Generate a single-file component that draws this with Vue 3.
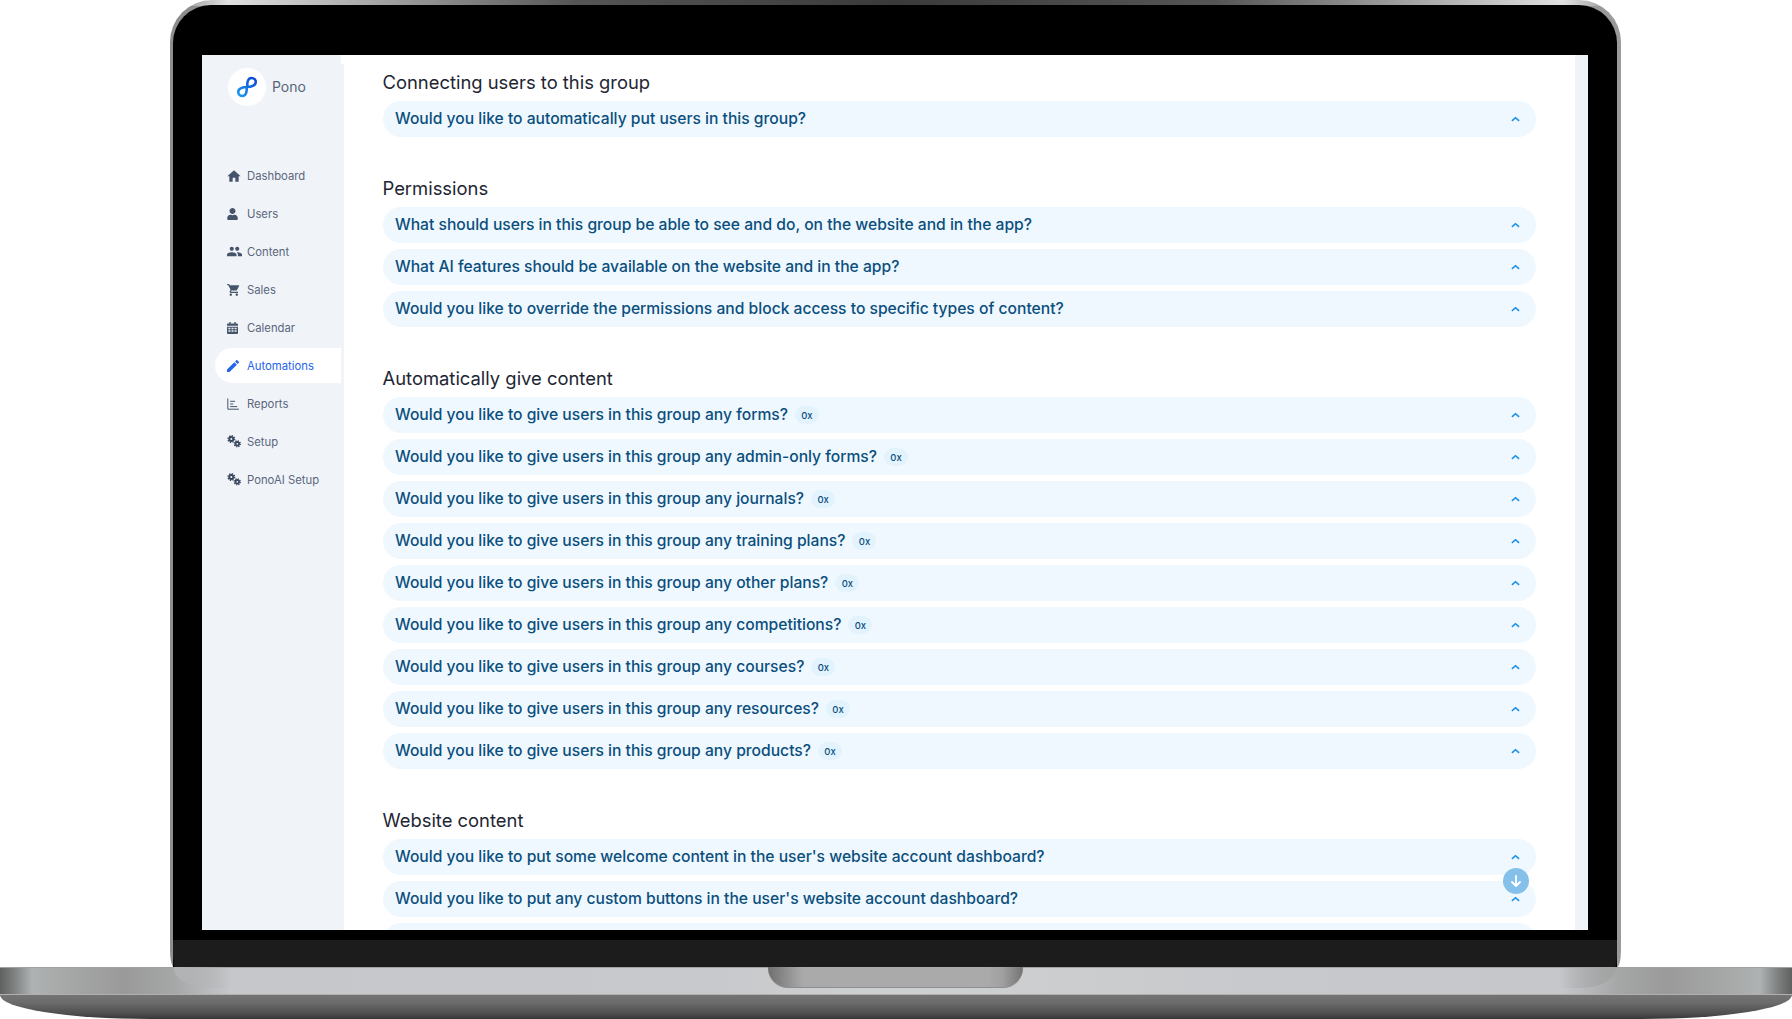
<script setup>
const nav = [
  { label: 'Dashboard', icon: 'home' },
  { label: 'Users', icon: 'user' },
  { label: 'Content', icon: 'users' },
  { label: 'Sales', icon: 'cart' },
  { label: 'Calendar', icon: 'calendar' },
  { label: 'Automations', icon: 'pen', active: true },
  { label: 'Reports', icon: 'chart' },
  { label: 'Setup', icon: 'cogs' },
  { label: 'PonoAI Setup', icon: 'cogs' },
]
const sections = [
  { title: 'Connecting users to this group', rows: [{ q: 'Would you like to automatically put users in this group?' }] },
  { title: 'Permissions', rows: [
    { q: 'What should users in this group be able to see and do, on the website and in the app?' },
    { q: 'What AI features should be available on the website and in the app?' },
    { q: 'Would you like to override the permissions and block access to specific types of content?' },
  ] },
  { title: 'Automatically give content', rows: [
    'forms', 'admin-only forms', 'journals', 'training plans', 'other plans', 'competitions', 'courses', 'resources', 'products',
  ].map((n) => ({ q: `Would you like to give users in this group any ${n}?`, badge: '0x' })) },
  { title: 'Website content', rows: [
    { q: "Would you like to put some welcome content in the user's website account dashboard?" },
    { q: "Would you like to put any custom buttons in the user's website account dashboard?" },
    { q: '' },
  ] },
]
</script>

<template>
  <div class="device">
    <div class="lid">
      <div class="screen">
        <aside class="sidebar">
          <div class="brand">
            <span class="logo">
              <svg viewBox="0 0 24 24" width="24" height="24" fill="none">
                <defs>
                  <linearGradient id="lg" x1="0" y1="1" x2="1" y2="0">
                    <stop offset="0" stop-color="#1c9cf0" />
                    <stop offset="1" stop-color="#0b44d4" />
                  </linearGradient>
                </defs>
                <path d="M12.300 12C12 7 13 3 16.500 3 19 3 20.800 5 20.800 7 20.800 10.500 16 12 12 12 8 12 3.200 13.500 3.200 17 3.200 19 5 21 7.500 21 11 21 12 17 11.700 12" stroke="url(#lg)" stroke-width="2.600" stroke-linecap="round" />
              </svg>
            </span>
            <span class="brand-name">Pono</span>
          </div>
          <nav class="nav">
            <a v-for="item in nav" :key="item.label" class="nav-item" :class="{ active: item.active }">
              <span class="nav-icon">
                <svg v-if="item.icon === 'home'" viewBox="1.500 2.500 21 18" width="14" height="12" fill="currentColor"><path d="M10 20v-6h4v6h5v-8h3L12 3 2 12h3v8z" /></svg>
                <svg v-else-if="item.icon === 'user'" viewBox="0 0 448 512" width="11" height="12" fill="currentColor"><path d="M224 256c70.700 0 128-57.300 128-128S294.700 0 224 0 96 57.300 96 128s57.300 128 128 128zm89.600 32h-16.700c-22.200 10.200-46.900 16-72.900 16s-50.600-5.800-72.900-16h-16.700C60.200 288 0 348.200 0 422.400V464c0 26.500 21.500 48 48 48h352c26.500 0 48-21.500 48-48v-41.600c0-74.200-60.200-134.400-134.400-134.400z" /></svg>
                <svg v-else-if="item.icon === 'users'" viewBox="1 5 22 14" width="15" height="11" fill="currentColor"><path d="M16 11c1.660 0 2.990-1.340 2.990-3S17.660 5 16 5c-1.660 0-3 1.340-3 3s1.340 3 3 3zm-8 0c1.660 0 2.990-1.340 2.990-3S9.660 5 8 5C6.340 5 5 6.340 5 8s1.340 3 3 3zm0 2c-2.330 0-7 1.170-7 3.500V19h14v-2.500c0-2.330-4.670-3.500-7-3.500zm8 0c-.29 0-.62.02-.97.05 1.160.84 1.970 1.970 1.970 3.450V19h6v-2.500c0-2.330-4.670-3.500-7-3.500z" /></svg>
                <svg v-else-if="item.icon === 'cart'" viewBox="1 2 21 20" width="13" height="12" fill="currentColor"><path d="M7 18c-1.100 0-1.990.9-1.990 2S5.900 22 7 22s2-.9 2-2-.9-2-2-2zM1 2v2h2l3.600 7.590-1.350 2.450c-.16.28-.25.61-.25.96 0 1.100.9 2 2 2h12v-2H7.420c-.14 0-.25-.11-.25-.25l.03-.12.9-1.630h7.450c.75 0 1.410-.41 1.750-1.030l3.580-6.490c.08-.14.12-.31.12-.48 0-.55-.45-1-1-1H5.210l-.94-2H1zm16 16c-1.100 0-1.990.9-1.990 2s.89 2 1.990 2 2-.9 2-2-.9-2-2-2z" /></svg>
                <svg v-else-if="item.icon === 'calendar'" viewBox="0 0 12 13" width="11" height="12" fill="currentColor"><path fill-rule="evenodd" d="M2.500 0h1.500v1.500h4V0h1.500v1.500H11a1 1 0 0 1 1 1V4H0V2.500a1 1 0 0 1 1-1h1.500zM0 5h12v7a1 1 0 0 1-1 1H1a1 1 0 0 1-1-1zm1.500 1.200v1.600h2.200V6.200zm3.400 0v1.600h2.200V6.200zm3.400 0v1.600h2.200V6.200zM1.500 9v1.600h2.200V9zm3.400 0v1.600h2.200V9zm3.400 0v1.600h2.200V9z" /></svg>
                <svg v-else-if="item.icon === 'pen'" viewBox="3 3 18 18" width="12" height="12" fill="currentColor"><path d="M3 17.250V21h3.750L17.810 9.940l-3.750-3.750L3 17.250zM20.710 7.040c.39-.39.39-1.020 0-1.410l-2.340-2.340c-.39-.39-1.020-.39-1.410 0l-1.830 1.830 3.750 3.750 1.830-1.830z" /></svg>
                <svg v-else-if="item.icon === 'chart'" viewBox="0 0 12 12" width="12" height="12" fill="none" stroke="currentColor" stroke-width="1"><path d="M.8.5v10.700H12M3.200 3.300h4.800M3.200 6h3M3.200 8.600h7" /></svg>
                <svg v-else viewBox="0 0 14 13" width="14" height="13" fill="none" stroke="#39475e">
                  <circle cx="4.300" cy="4" r="2" stroke-width="1.900" />
                  <circle cx="4.300" cy="4" r="3.300" stroke-width="1.400" stroke-dasharray="1.300 1.290" />
                  <circle cx="10.300" cy="8.800" r="1.800" stroke-width="1.800" />
                  <circle cx="10.300" cy="8.800" r="3" stroke-width="1.300" stroke-dasharray="1.200 1.160" />
                </svg>
              </span>
              <span>{{ item.label }}</span>
            </a>
          </nav>
        </aside>
        <main class="main">
          <section v-for="s in sections" :key="s.title" class="section">
            <h2 class="heading">{{ s.title }}</h2>
            <div v-for="(r, i) in s.rows" :key="i" class="row">
              <span class="q">{{ r.q }}</span>
              <span v-if="r.badge" class="badge">{{ r.badge }}</span>
              <svg v-if="r.q" class="chev" viewBox="0 0 10 6" width="9" height="6" fill="none"><path d="M1 5l4-3.500L9 5" stroke="currentColor" stroke-width="1.700" /></svg>
            </div>
          </section>
        </main>
        <div class="track"></div>
        <button class="scroll-btn" type="button" aria-label="Scroll down">
          <svg viewBox="0 0 14 14" width="14" height="14" fill="none" stroke="#fff" stroke-width="1.800" stroke-linecap="round" stroke-linejoin="round"><path d="M7 1.800v10M3 8l4 4 4-4" /></svg>
        </button>
      </div>
      <div class="chin"></div>
    </div>
    <div class="base">
      <div class="deck">
        <span class="hinge left"></span>
        <span class="hinge right"></span>
        <span class="notch"></span>
      </div>
      <div class="foot"></div>
    </div>
  </div>
</template>

<style scoped>
.device {
  width: 1792px;
  height: 1019px;
  overflow: hidden;
  background: #fff;
  display: flex;
  flex-direction: column;
  font-family: Inter, "Liberation Sans", sans-serif;
  position: relative;
}
.lid {
  position: relative;
  z-index: 2;
  height: 967px;
  margin: 0 171px 0 170px;
  padding: 5px 4px 0 3px;
  box-sizing: border-box;
  border-radius: 42px 42px 4px 4px / 42px 42px 17px 17px;
  background:
    linear-gradient(90deg, #8a8a8a 0, #e0e0e0 4%, #555 28%, #3a3a3a 50%, #555 72%, #e0e0e0 96%, #8a8a8a 100%) top / 100% 6px no-repeat,
    linear-gradient(90deg, #8e8e8e 0, #6a6a6a 50%, #9a9a9a 100%);
  display: flex;
  flex-direction: column;
}
.screen {
  flex: 1;
  min-height: 0;
  background: #000;
  border-radius: 38px 38px 0 0;
  padding: 50px 29px 10px 29px;
  display: grid;
  grid-template-columns: 142px 1fr 13px;
  position: relative;
}
.sidebar {
  background: #f0f4f9;
  position: relative;
  padding: 13px 0 0 13px;
  box-sizing: border-box;
  height: 875px;
}
.sidebar::after {
  content: '';
  position: absolute;
  top: 0;
  right: 0;
  width: 3px;
  height: 9px;
  background: #fff;
}
.brand {
  display: flex;
  align-items: center;
  gap: 6px;
  margin-left: 13px;
  height: 38px;
}
.logo {
  width: 38px;
  height: 38px;
  border-radius: 50%;
  background: #fff;
  display: flex;
  align-items: center;
  justify-content: center;
}
.brand-name {
  font-size: 14px;
  line-height: 38px;
  height: 38px;
  color: #5a6478;
}
.nav {
  margin-top: 52px;
  display: flex;
  flex-direction: column;
  gap: 3px;
}
.nav-item {
  height: 35px;
  margin-right: 3px;
  padding-left: 12px;
  border-radius: 18px 0 0 18px;
  display: flex;
  align-items: center;
  font-size: 11.300px;
  color: #5b667c;
}
.nav-item.active {
  background: #fff;
  color: #2563eb;
}
.nav-icon {
  width: 20px;
  flex: none;
  display: flex;
  align-items: center;
  color: #46546b;
}
.active .nav-icon {
  color: #2563eb;
}
.main {
  background: #fff;
  height: 875px;
  overflow: hidden;
  padding: 10px 39px 0 38.500px;
  box-sizing: border-box;
}
.section {
  margin-bottom: 34px;
}
.heading {
  margin: 0 0 6px;
  height: 30px;
  line-height: 34px;
  font-size: 18.400px;
  font-weight: 400;
  color: #1e2633;
}
.row {
  height: 36px;
  margin-bottom: 6px;
  padding: 0 13px 0 12.500px;
  border-radius: 18px;
  background: #eff8ff;
  display: flex;
  align-items: center;
  box-sizing: border-box;
}
.q {
  font-size: 15.650px;
  font-weight: 500;
  color: #0b4f7d;
  white-space: nowrap;
  padding-bottom: 1px;
}
.badge {
  margin-left: 7px;
  width: 24px;
  height: 18px;
  border-radius: 9px;
  background: #e3f3fe;
  color: #0b4f7d;
  font-size: 9.500px;
  font-weight: 500;
  display: flex;
  align-items: center;
  justify-content: center;
}
.chev {
  margin-left: auto;
  margin-right: 3px;
  color: #1690e4;
}
.track {
  background: #f0f4f9;
  height: 875px;
}
.scroll-btn {
  position: absolute;
  left: 1330px;
  top: 863px;
  width: 26px;
  height: 26px;
  padding: 0;
  border: 0;
  border-radius: 50%;
  background: #84c0ea;
  display: flex;
  align-items: center;
  justify-content: center;
}
.chin {
  position: absolute;
  left: 3px;
  right: 4px;
  bottom: 0;
  height: 27px;
  border-radius: 0 0 2px 2px / 0 0 14px 14px;
  background: #1c1c1c;
}
.base {
  flex: 1;
  display: flex;
  flex-direction: column;
  position: relative;
}
.deck {
  height: 28px;
  position: relative;
  border-top: 1px solid #a2a2a2;
  border-bottom: 1px solid #b3adad;
  box-sizing: border-box;
  background: linear-gradient(90deg, #5f6060 0, #7b7d7d .7%, #aeb2b2 1.800%, #a5a6a6 4%, #9a9a9a 7%, #a5a6a6 9.600%, #c6c7cb 12.900%, #c8c9cc 40%, #ced1d1 50%, #c8c9cc 70%, #c6c7cb 87.100%, #a5a6a6 90.400%, #9a9a9a 93%, #a5a6a6 96%, #aeb2b2 98.200%, #7b7d7d 99.300%, #5f6060 100%);
}
.hinge {
  position: absolute;
  top: -1px;
  width: 58px;
  height: 21px;
}
.hinge.left {
  left: 174px;
  border-radius: 0 0 0 36px / 0 0 0 20px;
  background: linear-gradient(90deg, #b2b4b5, rgba(198, 199, 203, 0));
}
.hinge.right {
  right: 176px;
  border-radius: 0 0 36px 0 / 0 0 20px 0;
  background: linear-gradient(270deg, #a2a3a3, rgba(198, 199, 203, 0));
}
.notch {
  position: absolute;
  top: -1px;
  left: 768px;
  width: 255px;
  height: 21px;
  border-radius: 0 0 20px 20px;
  border-bottom: 1px solid #8e8e8e;
  box-sizing: border-box;
  background: linear-gradient(90deg, #6f6f6f 0, #a3a3a3 12%, #aaa 14%, #aaa 86%, #a0a0a0 92%, #747474 100%);
}
.foot {
  flex: 1;
  border-radius: 0 0 150px 150px / 0 0 24px 24px;
  background: linear-gradient(180deg, #747474 0, #6c6c6c 30%, #4d4d4d 80%, #353535 100%);
}
</style>

<style>
html, body {
  margin: 0;
  background: #fff;
}
</style>
